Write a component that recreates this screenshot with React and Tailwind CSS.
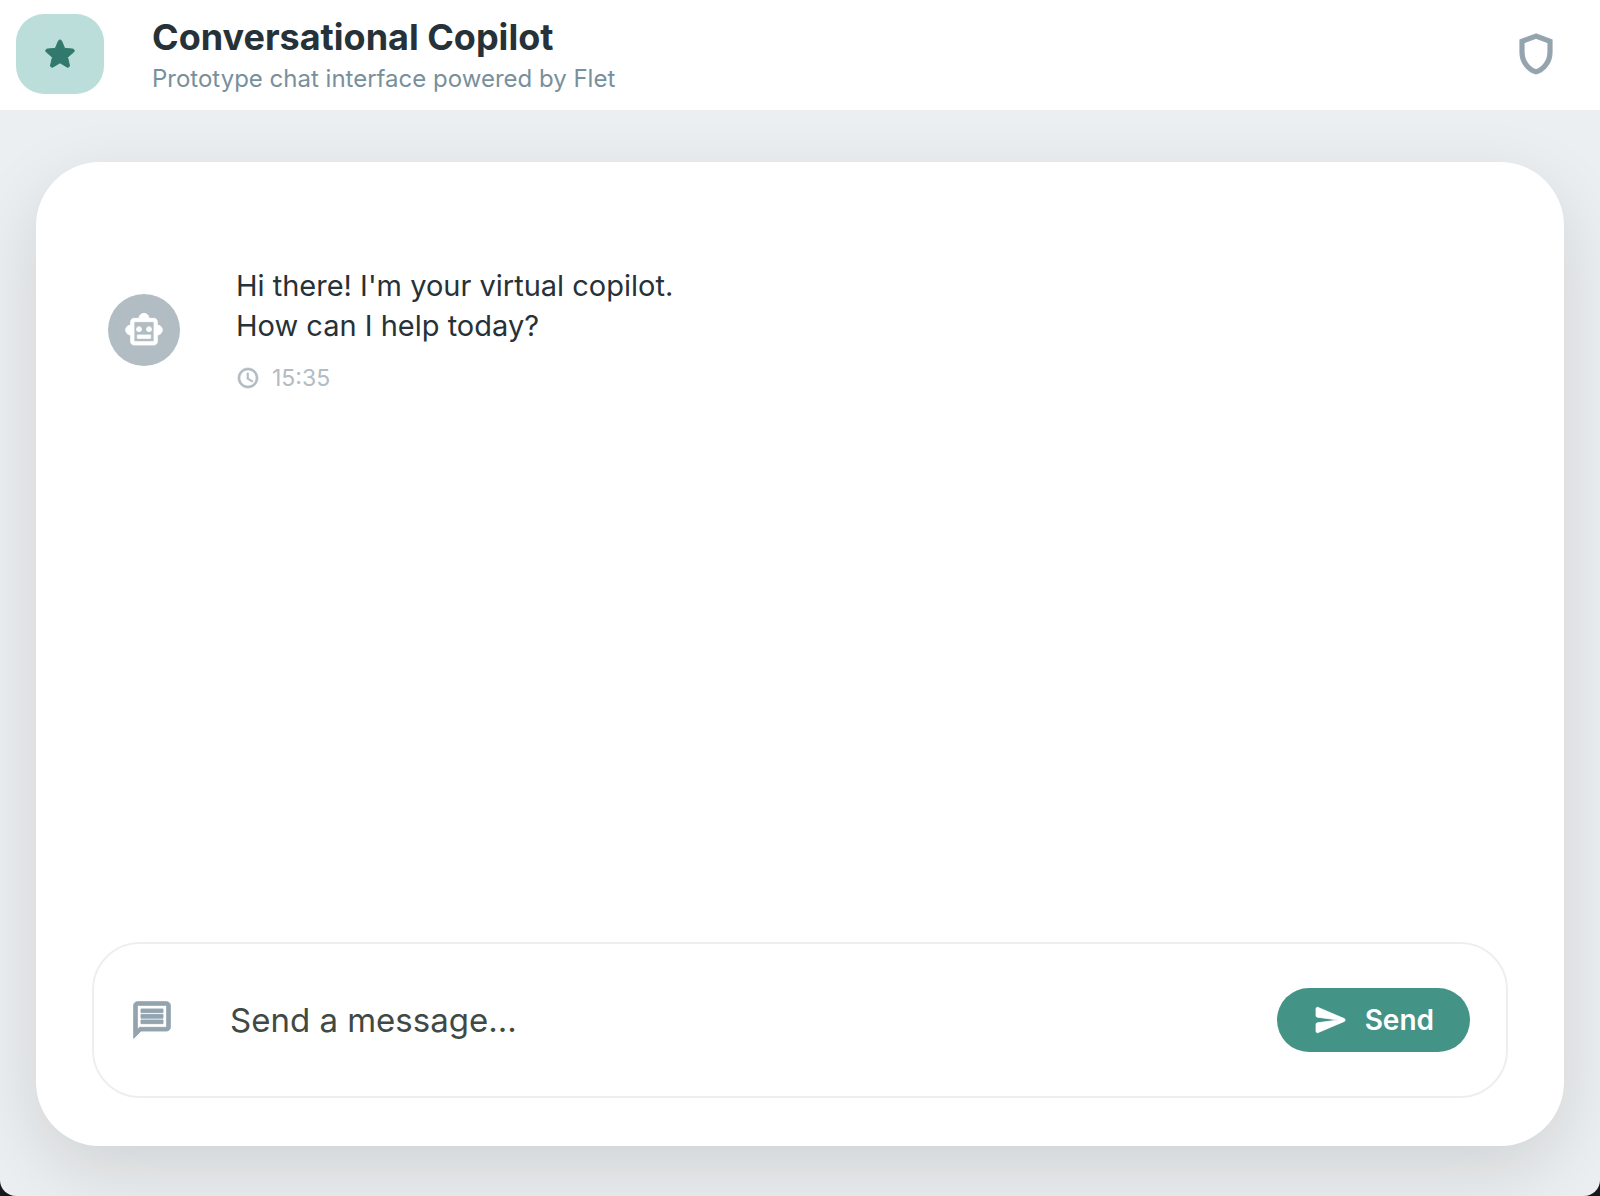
import { useState } from "react";

function Icon({ className, weight = 0.4, children }) {
  return (
    <svg
      viewBox="0 0 24 24"
      fill="currentColor"
      stroke="currentColor"
      strokeWidth={weight}
      aria-hidden="true"
      className={className}
    >
      {children}
    </svg>
  );
}

function Header() {
  return (
    <header className="flex items-center bg-white pt-2.5 pr-10 pb-3 pl-4">
      <div className="flex h-20 w-22 shrink-0 items-center justify-center rounded-[28px] bg-[#bbdeda] text-[#31796c]">
        <Icon className="size-10" weight={0.6}>
          <path
            strokeLinejoin="round"
            d="M12 17.27l4.15 2.51c.76.46 1.69-.22 1.49-1.08l-1.1-4.72 3.67-3.18c.67-.58.31-1.68-.57-1.75l-4.83-.41-1.89-4.46c-.34-.81-1.5-.81-1.84 0L9.19 8.63l-4.83.41c-.88.07-1.24 1.17-.57 1.75l3.67 3.18-1.1 4.72c-.2.86.73 1.54 1.49 1.08l4.15-2.5z"
          />
        </Icon>
      </div>
      <div className="ml-12 min-w-0 flex-1 pt-1">
        <h1 className="text-[36px] leading-[46px] font-bold text-[#263238]">Conversational Copilot</h1>
        <p className="text-[24px] leading-[38px] text-[#78909c]">Prototype chat interface powered by Flet</p>
      </div>
      <button type="button" aria-label="Privacy" className="text-[#94a4af]">
        <Icon className="size-12" weight={0.6}>
          <path d="M12 2L4 5v6.09c0 5.05 3.41 9.76 8 10.91 4.59-1.15 8-5.86 8-10.91V5l-8-3zm6 9.09c0 4-2.55 7.7-6 8.83-3.45-1.13-6-4.82-6-8.83v-4.7l6-2.25 6 2.25v4.7z" />
        </Icon>
      </button>
    </header>
  );
}

function Message() {
  return (
    <article className="flex items-center px-4">
      <div className="flex size-18 shrink-0 items-center justify-center rounded-full bg-[#b1bcc3] text-white">
        <Icon className="size-10" weight={0.5}>
          <path d="M20 9V7c0-1.1-.9-2-2-2h-3c0-1.66-1.34-3-3-3S9 3.34 9 5H6c-1.1 0-2 .9-2 2v2c-1.66 0-3 1.34-3 3s1.34 3 3 3v4c0 1.1.9 2 2 2h12c1.1 0 2-.9 2-2v-4c1.66 0 3-1.34 3-3s-1.34-3-3-3zm-2 10H6V7h12v12z" />
          <circle cx="9" cy="11.5" r="1.5" />
          <circle cx="15" cy="11.5" r="1.5" />
          <path d="M8 15h8v2H8z" />
        </Icon>
      </div>
      <div className="ml-14">
        <p className="text-[29px] leading-10 text-[#263238]">
          Hi there! I'm your virtual copilot.
          <br />
          How can I help today?
        </p>
        <div className="mt-4 flex h-8 items-center gap-3 text-[23px] text-[#b1bcc3]">
          <Icon className="size-6" weight={0.7}>
            <path d="M11.99 2C6.47 2 2 6.48 2 12s4.47 10 9.99 10C17.52 22 22 17.52 22 12S17.52 2 11.99 2zM12 20c-4.42 0-8-3.58-8-8s3.58-8 8-8 8 3.58 8 8-3.58 8-8 8zm.5-13H11v6l5.25 3.15.75-1.23-4.5-2.67z" />
          </Icon>
          <time>15:35</time>
        </div>
      </div>
    </article>
  );
}

function Composer() {
  const [text, setText] = useState("");
  return (
    <form
      className="flex items-center rounded-[48px] border-2 border-[#eceff1] px-9 py-11"
      onSubmit={(e) => e.preventDefault()}
    >
      <Icon className="size-11 shrink-0 text-[#94a4af]" weight={0.5}>
        <path d="M4 4h16v12H5.17L4 17.17V4m0-2c-1.1 0-1.99.9-1.99 2L2 22l4-4h14c1.1 0 2-.9 2-2V4c0-1.1-.9-2-2-2H4zm2 10h12v2H6v-2zm0-3h12v2H6V9zm0-3h12v2H6V6z" />
      </Icon>
      <input
        type="text"
        aria-label="Message"
        placeholder="Send a message…"
        value={text}
        onChange={(e) => setText(e.target.value)}
        className="mr-6 ml-14 h-16 min-w-0 flex-1 bg-transparent text-[33px] text-[#3f4945] outline-none placeholder:text-[#3f4945]"
      />
      <button
        type="submit"
        className="flex h-16 items-center gap-4 rounded-full bg-[#439387] px-9 text-[28px] font-semibold text-white"
      >
        <Icon className="size-9" weight={0.5}>
          <path
            strokeLinejoin="round"
            d="M3.4 20.4l17.45-7.48c.81-.35.81-1.49 0-1.84L3.4 3.6c-.66-.29-1.39.2-1.39.91L2 9.12c0 .5.37.93.87.99L17 12 2.87 13.88c-.5.07-.87.5-.87 1l.01 4.61c0 .71.73 1.2 1.39.91z"
          />
        </Icon>
        Send
      </button>
    </form>
  );
}

export default function App() {
  return (
    <div className="bg-[#16181b] font-['Inter',sans-serif]">
      <div className="flex min-h-screen flex-col overflow-hidden rounded-b-[16px] bg-[#eceff1]">
        <div className="relative z-10">
          <Header />
        </div>
        <main className="flex flex-1 flex-col px-9 pt-13 pb-[50px]">
          <section className="flex flex-1 flex-col rounded-[64px] bg-white px-14 pt-26 pb-12 shadow-[0_24px_72px_rgba(0,0,0,0.12)]">
            <div className="flex-1">
              <Message />
            </div>
            <Composer />
          </section>
        </main>
      </div>
    </div>
  );
}
